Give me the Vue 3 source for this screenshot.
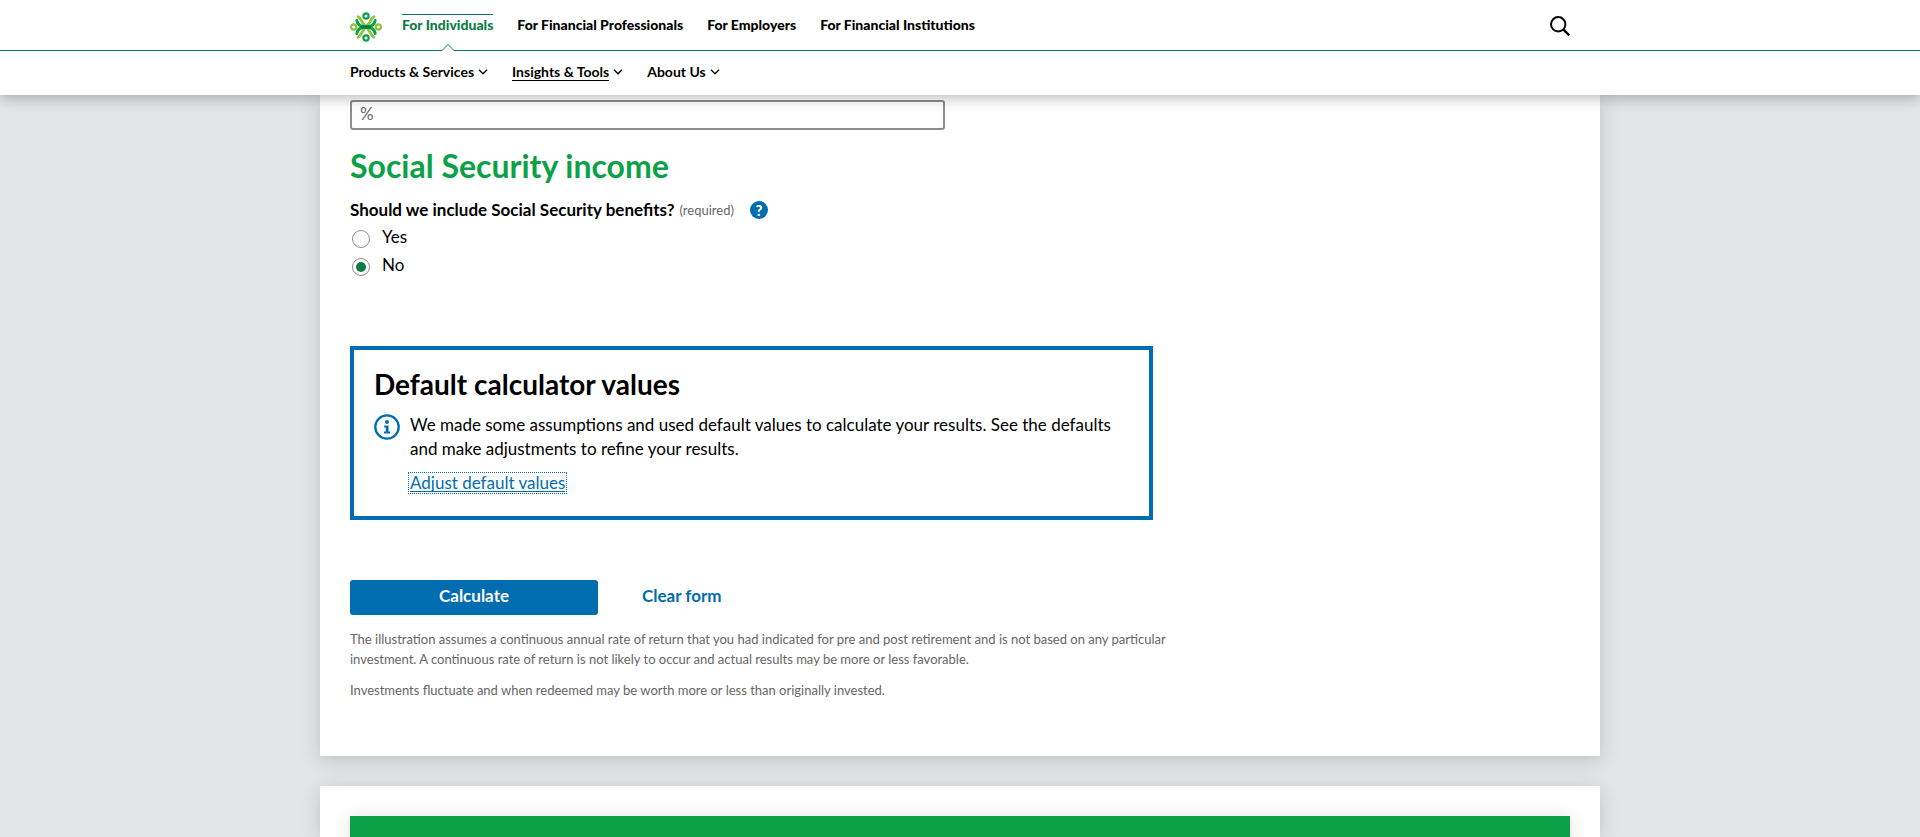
<script setup>
import { ref } from 'vue'

const audiences = [
  { label: 'For Individuals', active: true },
  { label: 'For Financial Professionals' },
  { label: 'For Employers' },
  { label: 'For Financial Institutions' }
]
const sections = [
  { label: 'Products & Services' },
  { label: 'Insights & Tools', active: true },
  { label: 'About Us' }
]
const rate = ref('')
const benefits = ref('no')
function clearForm() {
  rate.value = ''
  benefits.value = 'no'
}
</script>

<template>
  <div class="page">
    <header class="header">
      <div class="bar bar-top">
        <div class="wrap">
          <a href="#" class="logo" aria-label="Home">
            <svg width="32" height="30" viewBox="0 0 32 30" fill="none" stroke-linecap="round">
              <g stroke="#8cc63f" stroke-width="2.8">
                <path d="M8 4.8C10 5.5 11 8 12.500 10.500S15 14 16 14" />
                <path d="M24 4.8C22 5.5 21 8 19.500 10.500S17 14 16 14" />
                <path d="M8 25.200C10 24.500 11 22 12.500 19.500S15 15 16 15" />
                <path d="M24 25.200C22 24.500 21 22 19.500 19.500S17 15 16 15" />
              </g>
              <g stroke="#0da147" stroke-width="3">
                <path d="M6.800 8.500C7.500 12 10 14.400 14 14.400h4c4 0 6.500-2.400 7.200-5.900" />
                <path d="M6.800 21.500C7.500 18 10 15.600 14 15.600h4c4 0 6.500 2.400 7.200 5.900" />
              </g>
              <path d="M12 15h8" stroke="#067a3c" stroke-width="3" />
              <circle cx="16" cy="4" r="2.600" stroke="#0da147" stroke-width="2.200" />
              <circle cx="16" cy="26" r="2.600" stroke="#0da147" stroke-width="2.200" />
              <circle cx="3.700" cy="15" r="2.600" stroke="#8cc63f" stroke-width="2.200" />
              <circle cx="28.300" cy="15" r="2.600" stroke="#8cc63f" stroke-width="2.200" />
            </svg>
          </a>
          <nav class="audiences" aria-label="Audience">
            <a v-for="a in audiences" :key="a.label" href="#" :class="{ active: a.active }">
              {{ a.label }}
              <svg v-if="a.active" class="notch" width="14" height="8" viewBox="0 0 14 8">
                <path d="M1 7.500 7 1.500 13 7.500V8H1z" fill="#fff" />
                <path d="M0 7.500h1L7 1.500l6 6h1" fill="none" stroke="#0a7d43" />
              </svg>
            </a>
          </nav>
          <button type="button" class="search" aria-label="Search">
            <svg width="20" height="20" viewBox="0 0 20 20" fill="none" stroke="#000" stroke-width="2">
              <circle cx="8.200" cy="8.300" r="7.200" />
              <path d="M13.300 13.400l6 6" stroke-width="2.400" />
            </svg>
          </button>
        </div>
      </div>
      <div class="bar bar-sub">
        <nav class="wrap sections" aria-label="Sections">
          <a v-for="s in sections" :key="s.label" href="#" :class="{ active: s.active }">
            <span>{{ s.label }}</span>
            <svg width="10" height="6" viewBox="0 0 10 6" fill="none" stroke="#000" stroke-width="1.400">
              <path d="M1 .8 5 4.800 9 .8" />
            </svg>
          </a>
        </nav>
      </div>
    </header>

    <main class="cards">
      <form class="card form-card" @submit.prevent>
        <input v-model="rate" class="rate" type="text" placeholder="%" aria-label="Rate of return" />
        <h2>Social Security income</h2>
        <fieldset>
          <legend>
            <strong>Should we include Social Security benefits?</strong>
            <span class="required">(required)</span>
            <button type="button" class="help" aria-label="Help">?</button>
          </legend>
          <label><input v-model="benefits" type="radio" name="benefits" value="yes" /><span>Yes</span></label>
          <label><input v-model="benefits" type="radio" name="benefits" value="no" /><span>No</span></label>
        </fieldset>
        <section class="callout">
          <h3>Default calculator values</h3>
          <div class="note">
            <svg width="26" height="26" viewBox="0 0 26 26" fill="#006db0">
              <circle cx="13" cy="13" r="11.700" fill="none" stroke="#006db0" stroke-width="2.300" />
              <circle cx="13" cy="8" r="2" />
              <path d="M10.200 11.500h4.300v6h1.500v2h-6v-2h1.700v-4h-1.500z" />
            </svg>
            <div>
              <p>We made some assumptions and used default values to calculate your results. See the defaults and make adjustments to refine your results.</p>
              <a href="#" class="adjust">Adjust default values</a>
            </div>
          </div>
        </section>
        <div class="actions">
          <button type="submit" class="calculate">Calculate</button>
          <button type="button" class="clear" @click="clearForm">Clear form</button>
        </div>
        <div class="legal">
          <p>The illustration assumes a continuous annual rate of return that you had indicated for pre and post retirement and is not based on any particular investment. A continuous rate of return is not likely to occur and actual results may be more or less favorable.</p>
          <p>Investments fluctuate and when redeemed may be worth more or less than originally invested.</p>
        </div>
      </form>
      <section class="card results">
        <div class="banner"></div>
      </section>
    </main>
  </div>
</template>

<style>
body {
  margin: 0;
  background: #e4e5e7;
}
</style>

<style scoped>
.page {
  display: flex;
  flex-direction: column;
  min-height: 100vh;
  font-family: Lato, "Open Sans", sans-serif;
  font-size: 17px;
  line-height: 24px;
  color: #000;
}
.page * {
  box-sizing: border-box;
}
h2, h3, p {
  margin: 0;
}
button {
  padding: 0;
  border: 0;
  background: none;
  font: inherit;
  cursor: pointer;
}
.header {
  position: sticky;
  top: 0;
  z-index: 2;
  background: #fff;
  box-shadow: 0 2px 14px rgba(0, 0, 0, 0.3);
}
.wrap {
  display: flex;
  align-items: center;
  max-width: 1220px;
  height: 100%;
  margin: 0 auto;
}
.bar-top {
  height: 51px;
  border-bottom: 1px solid #0a7d43;
}
.bar-sub {
  height: 44px;
  padding-bottom: 2px;
}
.header a {
  color: #000;
  text-decoration: none;
}
.logo {
  margin-top: 4px;
  margin-right: 20px;
  height: 30px;
}
.audiences {
  display: flex;
  gap: 24px;
  height: 100%;
  font-size: 14px;
  font-weight: 900;
  line-height: 50px;
}
.audiences a {
  position: relative;
}
.audiences .active {
  color: #0a7d43;
}
.audiences .active::before {
  content: "";
  position: absolute;
  top: 14px;
  left: 0;
  right: 0;
  height: 1px;
  background: #0a7d43;
}
.notch {
  position: absolute;
  left: calc(50% - 7px);
  bottom: -1px;
}
.search {
  display: flex;
  margin-top: 2px;
  margin-left: auto;
}
.sections {
  gap: 24px;
  font-size: 14px;
  font-weight: 700;
  line-height: 16px;
}
.sections a {
  display: flex;
  align-items: center;
  gap: 4px;
}
.sections span {
  border-bottom: 1px solid transparent;
}
.sections .active span {
  border-color: #000;
}
.cards {
  display: flex;
  flex: 1;
  flex-direction: column;
  gap: 30px;
  width: 100%;
  max-width: 1280px;
  margin: 0 auto;
}
.card {
  padding: 30px;
  background: #fff;
  box-shadow: 0 4px 20px rgba(0, 0, 0, 0.16);
}
.form-card {
  padding-top: 5px;
  padding-bottom: 56px;
}
.rate {
  display: block;
  width: 49%;
  max-width: 595px;
  height: 30px;
  padding: 0 8px 4px;
  border: 2px solid #8b8b92;
  border-radius: 3px;
  background: transparent;
  font: inherit;
}
.rate::placeholder {
  color: #666;
}
h2 {
  margin-top: 18px;
  font-size: 32px;
  line-height: 36px;
  color: #0da147;
}
fieldset {
  margin: 14px 0 0;
  padding: 0;
  border: 0;
}
legend {
  display: flex;
  align-items: center;
  padding: 0 0 1px;
}
.required {
  margin-left: 5px;
  font-size: 13px;
  color: #666;
}
.help {
  width: 18px;
  height: 18px;
  margin-left: 16px;
  border-radius: 50%;
  background: #006db0;
  color: #fff;
  font-size: 15px;
  font-weight: 900;
  line-height: 18px;
}
fieldset label {
  display: flex;
  gap: 12px;
  width: max-content;
  height: 28px;
  line-height: 28px;
}
fieldset input {
  display: grid;
  place-items: center;
  appearance: none;
  width: 18px;
  height: 18px;
  margin: 7px 0 0 2px;
  border: 1px solid #8b8b8b;
  border-radius: 50%;
}
fieldset input:checked::before {
  content: "";
  width: 10px;
  height: 10px;
  border-radius: 50%;
  background: #0a7d43;
}
.callout {
  max-width: 803px;
  margin-top: 67px;
  padding: 18px 20px 21px;
  border: 4px solid #006db0;
}
h3 {
  font-size: 28px;
  line-height: 32px;
}
.note {
  display: flex;
  gap: 10px;
  margin-top: 13px;
}
.note svg {
  flex: none;
  margin-top: 1px;
}
.adjust {
  display: inline-block;
  margin-top: 13px;
  border-bottom: 1px solid;
  outline: 1px dotted #006db0;
  outline-offset: 1px;
  color: #006db0;
  line-height: 17px;
  text-decoration: none;
}
.actions {
  display: flex;
  gap: 44px;
  margin-top: 60px;
  font-weight: 700;
}
.calculate {
  width: 248px;
  height: 35px;
  padding-bottom: 4px;
  border-radius: 3px;
  background: #006db0;
  color: #fff;
}
.clear {
  padding-bottom: 4px;
  color: #006db0;
}
.legal {
  max-width: 820px;
  margin-top: 14px;
  font-size: 13px;
  line-height: 20px;
  color: #666;
}
.legal p + p {
  margin-top: 11px;
}
.results {
  display: flex;
  flex: 1;
  padding-bottom: 0;
}
.banner {
  flex: 1;
  background: #0da147;
  box-shadow: 0 4px 20px rgba(0, 0, 0, 0.16);
}
</style>
